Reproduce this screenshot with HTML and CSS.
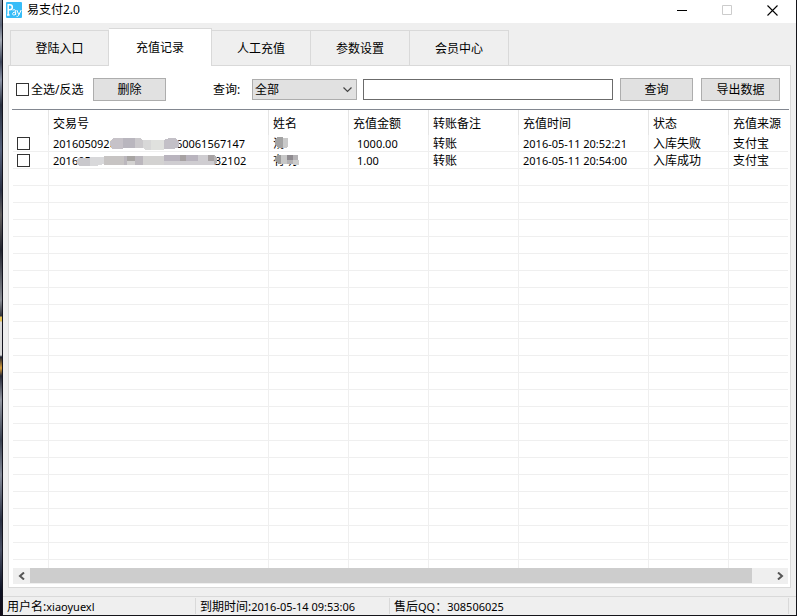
FILE: index.html
```
<!DOCTYPE html>
<html lang="zh-CN">
  <head>
    <meta charset="utf-8">
    <title>易支付2.0</title>
    <link rel="stylesheet" href="styles.css">
  </head>
  <body>
    <div class="desktop"></div>
    <div class="window">
      <header class="titlebar">
        <svg class="logo" width="16" height="16" viewBox="0 0 16 16">
          <rect width="16" height="16" rx="1" fill="#38bdf8"/>
          <g fill="none" stroke="#fff">
            <path stroke-width="1.5" d="M2.2 13V2.8h1.6c3.4 0 3.4 5 0 5H2.4M1 13h2.6"/>
            <path d="M6.6 8.2c2-1 3-.4 3 1V13M9.6 10c-3.6 0-3.8 3-1.8 3 1 0 1.8-.8 1.8-1.6M10.8 8l2 4.6M15.2 8l-2.6 5.4c-.4 1-1 1.2-2 1"/>
          </g>
        </svg>
        <h1>易支付2.0</h1>
        <button class="win-btn" aria-label="最小化">
          <svg width="11" height="11"><path d="M0 5.5h10" stroke="#000"/></svg>
        </button>
        <button class="win-btn" aria-label="最大化" disabled>
          <svg width="11" height="11"><path d="M.5.5h9v9h-9z" fill="none" stroke="#ccc"/></svg>
        </button>
        <button class="win-btn" aria-label="关闭">
          <svg width="11" height="11"><path d="M.5.5l10 10M10.5.5l-10 10" stroke="#000" stroke-width="1.1"/></svg>
        </button>
      </header>

      <nav class="tabs">
        <button class="tab">登陆入口</button>
        <button class="tab active">充值记录</button>
        <button class="tab">人工充值</button>
        <button class="tab">参数设置</button>
        <button class="tab">会员中心</button>
      </nav>

      <main class="panel">
        <div class="toolbar">
          <label class="check-all"><input type="checkbox" class="check">全选/反选</label>
          <button class="btn">删除</button>
          <label class="query-label" for="type">查询:</label>
          <select id="type" class="type">
            <option>全部</option>
          </select>
          <input type="text" class="keyword" aria-label="关键字">
          <button class="btn">查询</button>
          <button class="btn export">导出数据</button>
        </div>

        <div class="list">
          <div class="rows">
            <table>
              <colgroup>
                <col class="c-check"><col class="c-no"><col class="c-name"><col class="c-money">
                <col class="c-note"><col class="c-time"><col class="c-state"><col>
              </colgroup>
              <thead>
                <tr>
                  <th></th>
                  <th>交易号</th>
                  <th>姓名</th>
                  <th>充值金额</th>
                  <th>转账备注</th>
                  <th>充值时间</th>
                  <th>状态</th>
                  <th>充值来源</th>
                </tr>
              </thead>
              <tbody id="records">
                <tr>
                  <td class="pick"><input type="checkbox" class="check" aria-label="选择第1行"></td>
                  <td class="num">
                    <div class="masked">
                      <span>2016050920</span>
                      <svg class="mask mask-a" width="69" height="14" viewBox="0 0 69 14" shape-rendering="crispEdges">
                        <path fill="#c6c2c8" d="M3 1h10v11H2L0 8V4z"/>
                        <path fill="#b9b6be" d="M13 1h12v10H13z"/>
                        <path fill="#cbc9cc" d="M25 1h6l2 3v7H25z"/>
                        <path fill="#d8d8d8" d="M33 3h8v10h-6l-2-3z"/>
                        <path fill="#e0e1de" d="M41 3h13v10H41z"/>
                        <path fill="#c3c0c7" d="M54 3l5-2h7l3 4v5l-5 2H54z"/>
                      </svg>
                      <span>60061567147</span>
                    </div>
                  </td>
                  <td>
                    <div class="masked">
                      汤
                      <svg class="cover" width="14" height="12" viewBox="0 0 14 12" shape-rendering="crispEdges">
                        <path fill="#a3a3a3" d="M2 0h6v11H3L0 8V2z"/>
                        <path fill="#c9c9c9" d="M8 1h5v9l-2 1H8z"/>
                      </svg>
                    </div>
                  </td>
                  <td class="num money">1000.00</td>
                  <td>转账</td>
                  <td class="num">2016-05-11 20:52:21</td>
                  <td>入库失败</td>
                  <td>支付宝</td>
                </tr>
                <tr>
                  <td class="pick"><input type="checkbox" class="check" aria-label="选择第2行"></td>
                  <td class="num">
                    <div class="masked">
                      <span>201605</span>
                      <svg class="mask mask-b" width="142" height="12" viewBox="0 0 142 12" shape-rendering="crispEdges">
                        <path fill="#c9c8cc" d="M2 3h12v8H4L0 8z"/>
                        <path fill="#d8d8da" d="M14 2h14v7l-8 2h-6z"/>
                        <path fill="#c7c4c3" d="M28 1h20v9H28z"/>
                        <path fill="#a8a5a3" d="M51 1h8v5h-8z"/>
                        <path fill="#bbb7bd" d="M48 1h3v9h-3zM59 1h8v9h-8z"/>
                        <path fill="#d3d2d1" d="M51 6h8v4h-8zM67 1h21v9H67z"/>
                        <path fill="#b9b4be" d="M88 0h16v6H88zM110 0h12v6h-12z"/>
                        <path fill="#a7a2a3" d="M104 0h6v6h-6zM132 0h6v6h-6z"/>
                        <path fill="#cfcdd1" d="M88 6h50v4H88zM122 0h10v6h-10z"/>
                        <path fill="#b6b4b5" d="M138 0l3 3v5l-3 2z"/>
                      </svg>
                      <span>32102</span>
                    </div>
                  </td>
                  <td>
                    <div class="masked">
                      有明
                      <svg class="cover" width="24" height="12" viewBox="0 0 24 12" shape-rendering="crispEdges">
                        <path fill="#9c9c9c" d="M2 1h4v9H3L0 7V3z"/>
                        <path fill="#c8c8c8" d="M6 1h6v9H6z"/>
                        <path fill="#8f8b90" d="M12 1h6v5h-6z"/>
                        <path fill="#b4b2b5" d="M12 6h6v4h-6zM18 1h5v5h-5z"/>
                        <path fill="#ccc" d="M18 6h6v5h-6z"/>
                      </svg>
                    </div>
                  </td>
                  <td class="num money">1.00</td>
                  <td>转账</td>
                  <td class="num">2016-05-11 20:54:00</td>
                  <td>入库成功</td>
                  <td>支付宝</td>
                </tr>
              </tbody>
            </table>
          </div>
          <div class="scrollbar">
            <button class="arrow" aria-label="向左滚动">
              <svg width="8" height="8"><path d="M6 .5L2 4l4 3.500" fill="none" stroke="#555" stroke-width="2"/></svg>
            </button>
            <div class="track"><div class="thumb"></div></div>
            <button class="arrow" aria-label="向右滚动">
              <svg width="8" height="8"><path d="M2 .5L6 4 2 7.500" fill="none" stroke="#555" stroke-width="2"/></svg>
            </button>
          </div>
        </div>
      </main>

      <footer class="status">
        <div class="user">用户名:<span class="num">xiaoyuexl</span></div>
        <div class="expire">到期时间:<span class="num">2016-05-14 09:53:06</span></div>
        <div class="service">售后<span class="num">QQ</span>：<span class="num">308506025</span></div>
      </footer>
    </div>

    <script>
      // Fill the rest of the list with empty grid rows
      var records = document.getElementById('records');
      var area = document.querySelector('.rows');

      while (area.scrollHeight <= area.clientHeight) {
        var row = records.insertRow();
        for (var i = 0; i < 8; i++) {
          row.insertCell();
        }
      }
    </script>
  </body>
</html>
```
FILE: styles.css
```
* {
  box-sizing: border-box;
}

body {
  display: flex;
  height: 100vh;
  margin: 0;
  overflow: hidden;
  font: 12px/16px "Noto Sans", "Noto Sans CJK SC", sans-serif;
  color: #000;
}

button, select, input {
  margin: 0;
  padding: 0;
  font: inherit;
  color: inherit;
  border-radius: 0;
}

/* Strip of wallpaper left of the window */
.desktop {
  flex: none;
  width: 3px;
  border-right: 1px solid #15151f;
  background: linear-gradient(#8d94a3, #5d6679 25px, #a3a9b4 40px, #3b4357 62px, #8b93a5 80px, #29303f 105px, #56617c 150px, #2b3145 190px, #64605f 215px, #23252f 250px, #8a8d94 300px, #30323a 316px, #e3c055 317px, #e3c055 321px, #d8d8d8 322px, #d8d8d8 355px, #1d2130 357px, #d99e3a 368px, #252836 376px, #9296a0 400px, #39404f 440px, #858b99 475px, #2a3042 520px, #4a5064 550px, #0d1224 590px, #120c18);
}

.window {
  flex: 1;
  display: flex;
  flex-direction: column;
  min-width: 0;
  border: 1px solid #15151a;
  border-width: 0 1px 1px 0;
  background: #efefef;
}

/* Title bar */
.titlebar {
  display: flex;
  align-items: center;
  height: 23px;
  padding: 0 1px 3px 3px;
  background: #fff;
}

.titlebar h1 {
  flex: 1;
  margin: 0 0 0 5px;
  font-size: 12px;
  font-weight: normal;
}

.win-btn {
  display: flex;
  align-items: center;
  justify-content: center;
  width: 45px;
  height: 20px;
  border: 0;
  background: none;
}

/* Tabs */
.tabs {
  position: relative;
  display: flex;
  align-items: flex-end;
  height: 43px;
  margin-bottom: -1px;
  padding: 0 7px;
}

.tab {
  width: 99px;
  height: 36px;
  padding-top: 2px;
  border: 1px solid #d9d9d9;
  border-left: 0;
  background: #efefef;
}

.tab:first-child {
  border-left: 1px solid #d9d9d9;
}

.tab.active {
  width: 103px;
  height: 38px;
  padding-top: 0;
  border-bottom: 0;
  background: #fff;
}

/* Panel */
.panel {
  flex: 1;
  display: flex;
  flex-direction: column;
  min-height: 0;
  margin: 0 5px 8px;
  border: 1px solid #d9d9d9;
  background: #fff;
}

.toolbar {
  display: flex;
  align-items: center;
  height: 43px;
  padding: 4px 10px 0 7px;
}

.check {
  appearance: none;
  flex: none;
  display: block;
  width: 13px;
  height: 13px;
  border: 1px solid #333;
  background: #fff;
}

.check:checked {
  background: #333;
  box-shadow: inset 0 0 0 2px #fff;
}

.check-all {
  display: flex;
  align-items: center;
  gap: 2px;
  width: 77px;
  white-space: nowrap;
}

.btn {
  width: 73px;
  height: 23px;
  border: 1px solid #adadad;
  background: #e1e1e1;
}

.btn.export {
  width: 79px;
  margin-left: 8px;
}

.query-label {
  width: 39px;
  margin-left: 47px;
}

.type {
  appearance: none;
  width: 105px;
  height: 21px;
  padding: 0 2px;
  border: 1px solid #adadad;
  background: #e1e1e1 url("data:image/svg+xml,%3Csvg xmlns='http://www.w3.org/2000/svg' width='9' height='6'%3E%3Cpath d='M.5.5l4 4 4-4' fill='none' stroke='%23444' stroke-width='1.2'/%3E%3C/svg%3E") no-repeat right 4px center;
}

.keyword {
  flex: 1;
  min-width: 0;
  height: 21px;
  margin: 0 7px 0 6px;
  padding: 0 3px;
  border: 1px solid #6b6b6b;
  background: #fff;
}

/* List */
.list {
  flex: 1;
  display: flex;
  flex-direction: column;
  min-height: 0;
  margin: 0 1px 3px 3px;
  padding: 0 1px;
  border-top: 1px solid #828790;
}

.rows {
  flex: 1;
  min-height: 0;
  overflow: hidden;
}

table {
  width: 100%;
  table-layout: fixed;
  border-collapse: separate;
  border-spacing: 0;
}

.c-check { width: 36px; }
.c-no { width: 220px; }
.c-name, .c-money, .c-state { width: 80px; }
.c-note { width: 90px; }
.c-time { width: 130px; }

th, td {
  border-right: 1px solid #efefef;
  text-align: left;
  font-weight: normal;
  white-space: nowrap;
}

th {
  height: 25px;
  padding: 2px 0 0 4px;
  border-right-color: #e5e5e5;
}

td {
  height: 17px;
  padding: 1px 0 0 4px;
  border-bottom: 1px solid #efefef;
  line-height: 15px;
}

.num {
  font-size: 11px;
}

th:last-child, td:last-child {
  border-right: 0;
}

td.money {
  padding-left: 8px;
}

/* Blurred-out parts of private data */
.masked {
  position: relative;
  display: flex;
  align-items: center;
  height: 15px;
}

.mask {
  position: relative;
  flex: none;
}

.mask-a {
  margin: 0 -3px 0 -6px;
}

.mask-b {
  margin: 0 -3px 0 -15px;
}

.cover {
  position: absolute;
  left: 2px;
  top: 1px;
}

/* Scrollbar */
.scrollbar {
  display: flex;
  height: 16px;
  background: #efefef;
}

.arrow {
  display: flex;
  align-items: center;
  justify-content: center;
  width: 17px;
  border: 0;
  background: none;
}

.track {
  flex: 1;
  padding-right: 19px;
}

.thumb {
  height: 15px;
  background: #cdcdcd;
}

/* Status bar */
.status {
  display: flex;
  height: 19px;
  padding: 1px 7px 1px 0;
  border-top: 1px solid #d9d9d9;
}

.status div {
  padding-left: 4px;
  border-right: 1px solid #d9d9d9;
  line-height: 17px;
  white-space: nowrap;
}

.user {
  width: 193px;
}

.expire {
  width: 194px;
}

.service {
  flex: 1;
}
```
